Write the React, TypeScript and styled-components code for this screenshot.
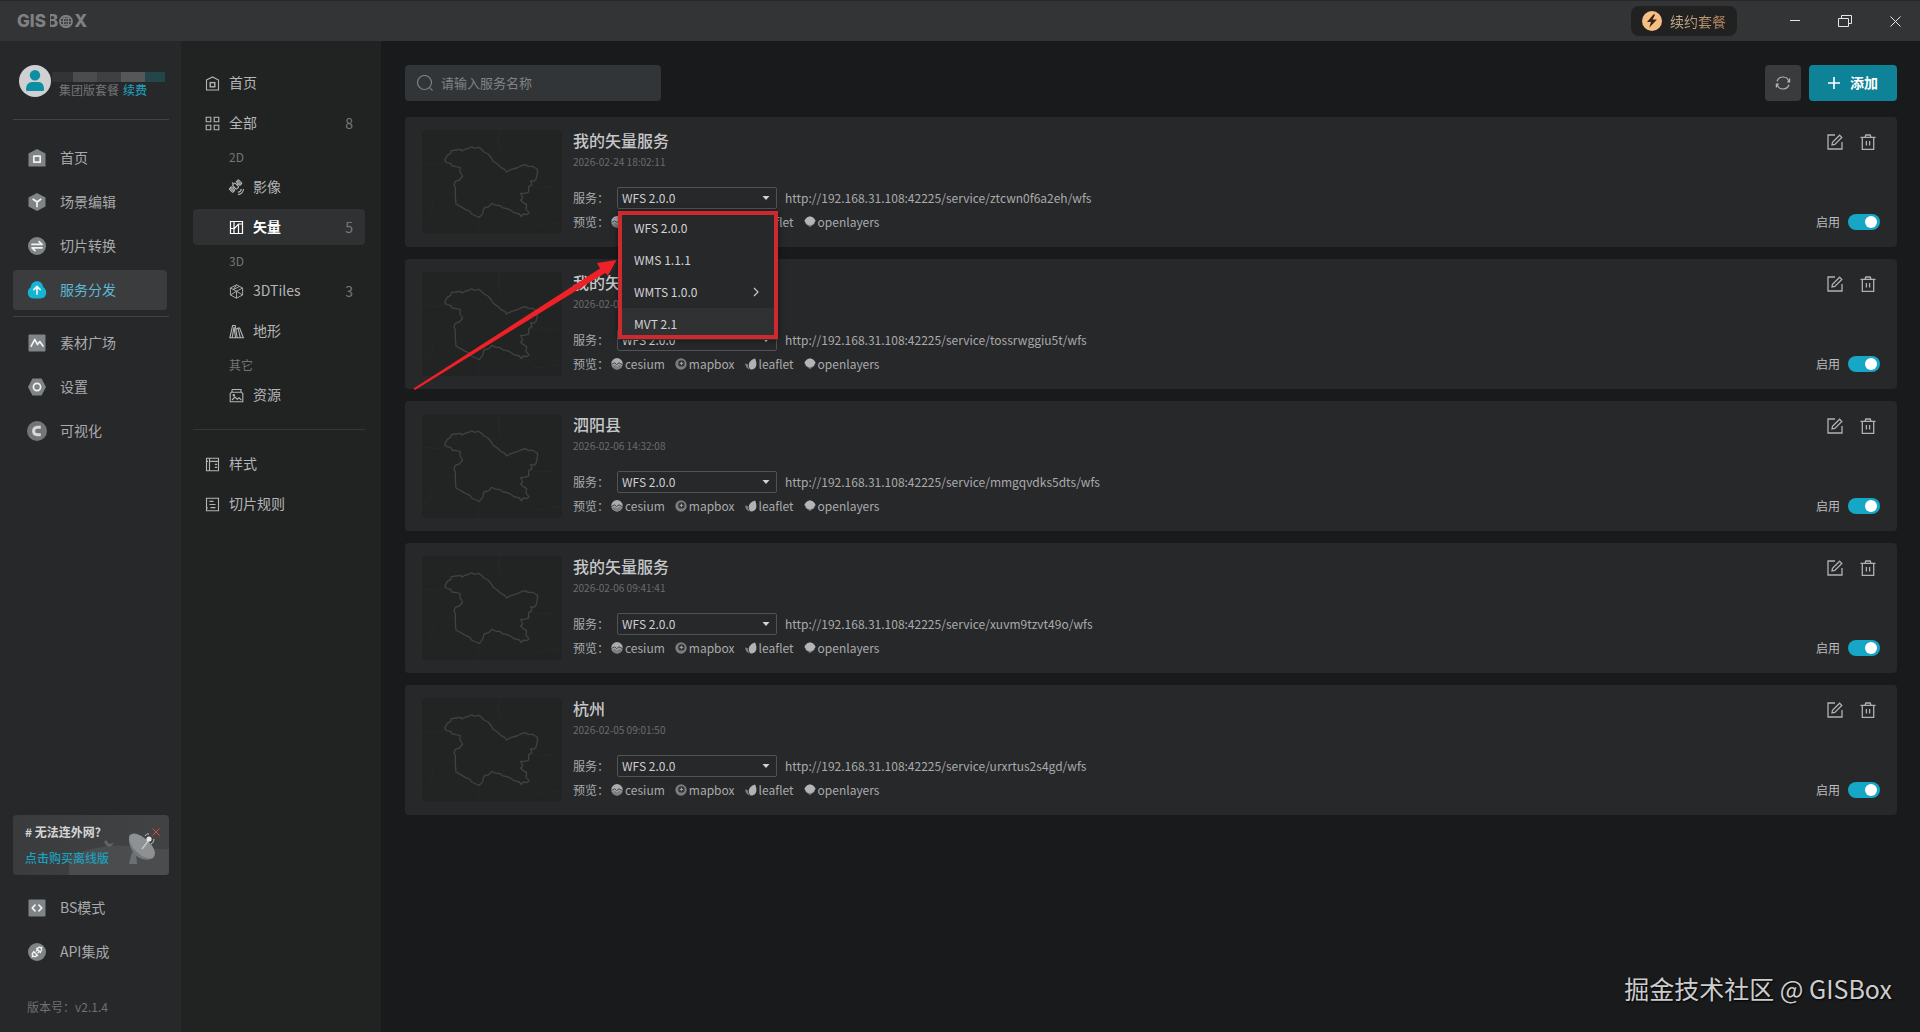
import React from "react";
import styled, { createGlobalStyle, css } from "styled-components";

const GlobalStyle = createGlobalStyle`
  *, *::before, *::after { box-sizing: border-box; }
  body {
    margin: 0;
    background: #191a1c;
    color: #a9aaac;
    font-family: "Noto Sans CJK SC", "Noto Sans", sans-serif;
    font-size: 14px;
    line-height: 20px;
  }
  button, input, select { font: inherit; color: inherit; }
  button { border: 0; padding: 0; background: none; cursor: pointer; }
  a { color: inherit; text-decoration: none; }
  ul { list-style: none; margin: 0; padding: 0; }
  svg { display: block; flex: none; }
`;

/* ---------- shell ---------- */

const Shell = styled.div`
  position: relative;
  display: flex;
  flex-direction: column;
  min-height: 100vh;
`;

const TitleBar = styled.header`
  display: flex;
  align-items: center;
  height: 41px;
  padding-left: 17px;
  background: #333436;
  border-top: 1px solid #262729;
`;

const Logo = styled.div`
  display: flex;
  align-items: center;
  gap: 1px;
  margin-right: auto;
  color: #7f8082;
  font-family: Inter, "Liberation Sans", sans-serif;
  font-size: 17px;
  font-weight: 800;
  line-height: 20px;
`;

const OpenB = styled.span`
  color: transparent;
  background: linear-gradient(90deg, transparent 3px, #7f8082 3px);
  background-clip: text;
`;

const RenewButton = styled.button`
  display: flex;
  align-items: center;
  gap: 8px;
  height: 30px;
  margin-right: 33px;
  padding: 0 11px;
  border-radius: 8px;
  background: #212122;
`;

const RenewText = styled.span`
  color: transparent;
  background: linear-gradient(90deg, #c5b494, #b08058);
  background-clip: text;
`;

const WindowButton = styled.button`
  display: grid;
  place-items: center;
  width: 50px;
  height: 40px;
  color: #e6e6e6;
`;

const Columns = styled.div`
  display: flex;
  flex: 1;
`;

const ItemText = styled.span`
  padding-bottom: 2px;
`;

/* ---------- primary sidebar ---------- */

const Sidebar = styled.aside`
  display: flex;
  flex-direction: column;
  width: 181px;
  flex: none;
  padding: 24px 12px 14px 13px;
  background: #27282a;
`;

const Account = styled.div`
  display: flex;
  align-items: flex-start;
  gap: 1px;
  height: 32px;
  padding-left: 6px;
`;

const AccountText = styled.div`
  display: flex;
  flex-direction: column;
  padding-top: 7px;
`;

const MaskedName = styled.div`
  display: flex;
  justify-content: center;
  width: 113px;
  height: 10px;
  overflow: hidden;
`;

const MaskBlock = styled.i<{ $tone: string }>`
  width: 24px;
  flex: none;
  background: ${(p) => p.$tone};
`;

const Plan = styled.div`
  padding-left: 7px;
  color: #747577;
  font-size: 12px;
  line-height: 16px;
`;

const Renew = styled.a`
  margin-left: 4px;
  color: #1fa5c4;
`;

const Rule = styled.hr<{ $top: number; $bottom: number; $tone?: string }>`
  width: 100%;
  height: 1px;
  margin: ${(p) => `${p.$top}px 0 ${p.$bottom}px`};
  border: 0;
  background: ${(p) => p.$tone ?? "#434446"};
`;

const NavList = styled.ul`
  display: flex;
  flex-direction: column;
  gap: 4px;
`;

const NavLink = styled.a<{ $active?: boolean }>`
  display: flex;
  align-items: center;
  gap: 14px;
  height: 40px;
  margin-right: 2px;
  padding-left: 15px;
  border-radius: 4px;
  color: #a9aaac;
  ${(p) =>
    p.$active &&
    css`
      background: #3b3c3e;
      color: #5cb8d4;
    `}
`;

const Promo = styled.section`
  position: relative;
  display: flex;
  flex-direction: column;
  gap: 6px;
  height: 60px;
  margin: auto 0 13px;
  padding: 7px 12px;
  border-radius: 4px;
  overflow: hidden;
  background: linear-gradient(100deg, #3a3b3d, #424345);
  font-size: 12px;
`;

const PromoTitle = styled.strong`
  position: relative;
  color: #d4d5d6;
  font-weight: 700;
`;

const PromoLink = styled.a`
  position: relative;
  color: #1ba0be;
  font-weight: 500;
`;

const PromoArt = styled.svg`
  position: absolute;
  right: 0;
  bottom: 0;
`;

const PromoClose = styled.button`
  position: absolute;
  top: 11px;
  right: 7px;
  display: grid;
  place-items: center;
  width: 12px;
  height: 12px;
  color: #e0464c;
`;

const Version = styled.p`
  margin: 25px 0 1px 14px;
  color: #6f7072;
  font-size: 12px;
`;

/* ---------- secondary panel ---------- */

const CategoryPanel = styled.nav`
  width: 200px;
  flex: none;
  padding: 24px 16px 24px 12px;
  background: #212222;
`;

const CategoryLink = styled.a<{ $nested?: boolean; $active?: boolean }>`
  display: flex;
  align-items: center;
  gap: 9px;
  height: 36px;
  margin-bottom: 4px;
  padding: 0 12px 0 ${(p) => (p.$nested ? 36 : 12)}px;
  border-radius: 4px;
  color: #b4b5b7;
  ${(p) =>
    p.$active &&
    css`
      background: #303133;
      color: #ffffff;
      font-weight: 700;
    `}
`;

const Count = styled.span`
  margin-left: auto;
  color: #77787a;
  font-weight: 400;
`;

const GroupLabel = styled.div`
  height: 24px;
  padding-left: 36px;
  color: #747577;
  font-size: 12px;
  line-height: 24px;
`;

/* ---------- main ---------- */

const Main = styled.main`
  flex: 1;
  min-width: 0;
  padding: 24px 23px 24px 24px;
`;

const Toolbar = styled.div`
  display: flex;
  gap: 8px;
  margin-bottom: 16px;
`;

const SearchBox = styled.label`
  display: flex;
  align-items: center;
  gap: 8px;
  width: 256px;
  height: 36px;
  margin-right: auto;
  padding: 0 12px;
  border-radius: 4px;
  background: #313538;
  color: #7d8082;
`;

const SearchInput = styled.input`
  flex: 1;
  min-width: 0;
  border: 0;
  padding: 0;
  outline: 0;
  background: none;
  color: #c8c9cb;
  font-size: 13px;
  &::placeholder { color: #808386; opacity: 1; }
`;

const RefreshButton = styled.button`
  display: grid;
  place-items: center;
  width: 36px;
  height: 36px;
  border-radius: 4px;
  background: #3a3b3d;
  color: #b4b5b7;
`;

const AddButton = styled.button`
  display: flex;
  align-items: center;
  justify-content: center;
  gap: 10px;
  width: 88px;
  height: 36px;
  border-radius: 4px;
  background: #0e8297;
  color: #ffffff;
  font-weight: 700;
`;

const CardList = styled.ul`
  display: flex;
  flex-direction: column;
  gap: 12px;
`;

const Card = styled.li`
  display: flex;
  padding: 13px 17px;
  border-radius: 4px;
  background: #27282a;
`;

const Thumb = styled.svg`
  margin-right: 11px;
  border-radius: 4px;
  background: #222323;
`;

const Details = styled.div`
  flex: 1;
  min-width: 0;
`;

const ServiceName = styled.h2`
  margin: 0 0 4px;
  color: #c6c7c9;
  font-size: 16px;
  font-weight: 500;
  line-height: 20px;
`;

const Created = styled.time`
  display: block;
  margin-bottom: 17px;
  color: #6b6c6e;
  font-size: 10px;
  line-height: 16px;
`;

const ServiceRow = styled.div`
  display: flex;
  align-items: center;
  gap: 8px;
  height: 22px;
  margin-bottom: 4px;
  font-size: 12px;
`;

const SelectWrap = styled.div`
  position: relative;
  width: 160px;
  height: 22px;
`;

const TypeSelect = styled.select`
  appearance: none;
  display: block;
  width: 100%;
  height: 100%;
  padding: 0 20px 0 4px;
  border: 1px solid #515254;
  border-radius: 2px;
  background: #27282a;
  color: #cdced0;
  line-height: 18px;
`;

const Caret = styled.svg`
  position: absolute;
  top: 9px;
  right: 7px;
  pointer-events: none;
`;

const Menu = styled.ul`
  position: absolute;
  z-index: 2;
  top: 25px;
  left: 1px;
  width: 160px;
  background: #27282a;
  box-shadow: 0 0 6px rgba(0, 0, 0, 0.5);
  &::after {
    content: "";
    position: absolute;
    inset: -1px 0 1px 0;
    border: 4px solid #cf2930;
    pointer-events: none;
  }
`;

const MenuItem = styled.button<{ $hover?: boolean }>`
  display: flex;
  align-items: center;
  justify-content: space-between;
  width: 100%;
  height: 32px;
  padding: 0 18px 0 16px;
  background: ${(p) => (p.$hover ? "#303133" : "transparent")};
  color: #d2d3d5;
`;

const PreviewRow = styled.div`
  display: flex;
  align-items: center;
  height: 18px;
  font-size: 12px;
  line-height: 18px;
`;

const PreviewLink = styled.a`
  display: flex;
  align-items: center;
  gap: 2px;
  margin: 0 8px 0 2px;
`;

const CardActions = styled.div`
  display: flex;
  flex-direction: column;
  align-items: flex-end;
  justify-content: space-between;
`;

const IconButtons = styled.div`
  display: flex;
  gap: 9px;
  color: #b0b1b3;
`;

const IconButton = styled.button`
  display: grid;
  place-items: center;
  width: 24px;
  height: 24px;
`;

const EnableLabel = styled.label`
  display: flex;
  align-items: center;
  gap: 8px;
  height: 24px;
  color: #bcbdbf;
  font-size: 12px;
`;

const Switch = styled.input`
  appearance: none;
  display: flex;
  align-items: center;
  width: 32px;
  height: 16px;
  margin: 0;
  padding: 0 3px;
  border-radius: 8px;
  background: #55575a;
  &::before {
    content: "";
    width: 12px;
    height: 12px;
    border-radius: 50%;
    background: #ffffff;
  }
  &:checked { background: #16a6c6; justify-content: flex-end; }
`;

const Arrow = styled.svg`
  position: absolute;
  z-index: 3;
  top: 255px;
  left: 410px;
  pointer-events: none;
`;

const Watermark = styled.div`
  position: absolute;
  right: 28px;
  bottom: 26px;
  color: #cdcdce;
  font-size: 25px;
  line-height: 36px;
  text-shadow: 1px 1px 2px #000000;
`;

/* ---------- icons ---------- */

const FILL = "#7f8486";

type IconProps = { children: React.ReactNode };

const Solid = ({ children }: IconProps) => (
  <svg width="18" height="18" viewBox="0 0 18 18" fill={FILL} strokeLinecap="round" strokeLinejoin="round" overflow="visible">
    {children}
  </svg>
);

const Line = ({ children }: IconProps) => (
  <svg width="15" height="15" viewBox="0 0 15 15" fill="none" stroke="currentColor" strokeWidth="1.1" overflow="visible">
    {children}
  </svg>
);

const white = { fill: "none", stroke: "#f2f2f2", strokeWidth: 1.7 };

const solidIcons = {
  home: <Solid><path d="M9 0 17.5 4.5V17.5H.5V4.5Z" /><rect x="5.8" y="7.2" width="6.4" height="6" {...white} /></Solid>,
  scene: <Solid><path d="M9 0 17.5 4.5v9L9 18 .5 13.5v-9Z" /><path d="M5.2 6.2 9 9l3.8-2.8M9 9v4.5" {...white} /></Solid>,
  convert: <Solid><circle cx="9" cy="9" r="9" /><path d="M4 7.4h10L11 4.6M14 10.8H4l3 2.8" {...white} /></Solid>,
  publish: <Solid><path fill="#14b4d2" d="M9 .2c3.600 0 5.800 2.600 6.200 5.800 1.900 1.500 3 3.500 3 5.700 0 3.500-2.500 5.700-5.600 5.700H5.400C2.300 17.400-.2 15.200-.2 11.700-.2 9.500.9 7.500 2.800 6 3.200 2.800 5.400.2 9 .2Z" /><path d="M9 13V6M5.800 8.600 9 5.400l3.200 3.200" {...white} /></Solid>,
  assets: <Solid><rect x=".5" y=".5" width="17" height="17" rx="1" /><path d="M3.200 12.200 6.800 5.400l2.700 5.200 2.300-3 3.200 4.400" {...white} /></Solid>,
  settings: <Solid><path d="M4.500.5h9L18 9l-4.500 8.500h-9L0 9Z" /><circle cx="9" cy="9" r="3.600" {...white} /></Solid>,
  visual: <Solid><circle cx="9" cy="9" r="10" fill="#737577" /><path d="M12.800 5.300H9.500C7 5.300 5.600 6.900 5.600 9s1.400 3.700 3.900 3.700h3.300" fill="none" stroke="#d8d8d8" strokeWidth="3" strokeLinecap="butt" /></Solid>,
  code: <Solid><rect x=".5" y=".5" width="17" height="17" rx="1" /><path d="M7 6.200 4.200 9 7 11.800M11 6.200 13.800 9 11 11.800" {...white} /></Solid>,
  plug: (
    <Solid>
      <circle cx="9" cy="9" r="9" />
      <g transform="rotate(45 9 9)" fill="none" stroke="#f2f2f2" strokeWidth="1.400">
        <path d="M6.200 6.800h5.600M6.800 6.800V5.600a2.200 2.200 0 0 1 4.400 0v1.200M9 3.200V2.200M7.800 7v1.800M10.200 7v1.800" />
        <path d="M6.200 11h5.600M6.800 11v1.400a2.200 2.200 0 0 0 4.400 0V11M9 14.800v1" />
      </g>
    </Solid>
  ),
};

const lineIcons = {
  home: <Line><path d="M1.500 4 7.500.9l6 3.100v10h-12Z" /><rect x="5.200" y="6.600" width="4.600" height="4.200" strokeWidth="1.400" /></Line>,
  grid: <Line><path d="M1.200 1.200h4.600v4.600H1.200ZM9.200 1.200h4.600v4.600H9.200ZM1.200 9.200h4.600v4.600H1.200ZM9.200 9.200h4.600v4.600H9.200Z" /></Line>,
  satellite: (
    <Line>
      <g transform="rotate(-45 6.500 6)">
        <rect x="4.700" y="3.200" width="3.600" height="5.800" rx="1" />
        <rect x="0" y="3.600" width="3" height="5" rx=".5" />
        <rect x="10" y="3.600" width="3" height="5" rx=".5" />
        <path d="M3 6.100h1.700M8.300 6.100H10M6.500 1v2.200M1.500 3.600v5M11.500 3.600v5" />
      </g>
      <path d="M8.800 12.200a4.200 4.200 0 0 0 3.600-3.400M9 14.600a6.600 6.600 0 0 0 5.600-5.600" />
    </Line>
  ),
  vector: <Line><path d="M1.500 1.500h12v12h-12ZM5 1.500v12M1.500 8.500h4l4-4.500h4M9.500 4v9.500" strokeWidth="1.200" /></Line>,
  cube: <Line><path d="M7.500.8 13.600 4v7l-6.100 3.200L1.400 11V4ZM1.400 4l6.100 3.200L13.600 4M7.500 7.200v7M1.400 11l6.100-3.800 6.100 3.800M7.500.8 4.400 5.600M10.600 2.400l-6.200 3.200" strokeWidth=".9" /></Line>,
  terrain: <Line><path d="M.8 13.800 3.600 1.500h2.600l2 12.300ZM3.200 13.500 5 3l1.500 10.500M7 5.400l2-1.400h1.600l3.800 9.800H8.200M9 4.200l2.300 9.400" /></Line>,
  resource: <Line><path d="M2.500 4.200h10l1.300 1.300v8.300H1.200V5.500ZM3 1.500h9v2.500M3 1.500v2.500M3 12l3-3 2.200 2.200 1.800-1.400 2.400 2.400" /><circle cx="4.800" cy="7.200" r=".7" /></Line>,
  style: <Line><path d="M1.500 1.200h12v12.600h-12ZM4.500 1.200v12.600M4.500 4.400h9M9.800 7.400h2.400M9.800 10.400h2.400M1.500 4.400h1.500" /></Line>,
  rules: <Line><path d="M1.500 1.200h12v12.600h-12ZM4.500 4.400h4M4.500 7.500h6M5.500 10.600h5M1.500 11h1.500" /></Line>,
};

const previewIcons = {
  cesium: <svg width="12" height="12" viewBox="0 0 12 12"><circle cx="6" cy="5.800" r="5.700" fill="#abacae" /><path d="M.4 6.600 3.600 4.800l2 1.800L8 4.800l3.500 2" fill="none" stroke="#3c3d3f" /><path d="M.8 8 3.600 6.400 6 8.400l2-1.800 3.300 1.400A5.700 5.700 0 0 1 .8 8Z" fill="#7d7e80" /></svg>,
  mapbox: <svg width="12" height="12" viewBox="0 0 12 12"><circle cx="6" cy="6" r="5.700" fill="#7b7d7f" /><circle cx="6.400" cy="5.400" r="3.200" fill="#303234" /><path d="m6.400 3.200.7 1.500 1.500.7-1.500.7-.7 1.500-.7-1.500-1.500-.7 1.500-.7Z" fill="#a6a7a9" /></svg>,
  leaflet: <svg width="12" height="12" viewBox="0 0 12 12"><path d="M10 .4C6.400 1.600 3.600 4 3.800 7.400c.1 2 1 3.400 2.200 4.200 3.400-.2 5.400-2.200 5.400-5.600C11.400 4 11 2 10 .4Z" fill="#b0b3b2" /><path d="M.2 5.600c0 3 1.800 5.400 5 6C3.600 10 3 8.400 3 6.400 2.200 5.800 1.200 5.600.2 5.600Z" fill="#7b7e7e" /></svg>,
  openlayers: <svg width="12" height="12" viewBox="0 0 12 12"><path d="M6 3.800 11 7.600 6 11.200 1 7.600Z" fill="#6e7072" /><path d="M6 .3 8.800 1.200 10.600 3l1 2L9.200 8.200 6 9.600 2.800 8.200.4 5l1-2L3.200 1.200Z" fill="#b4b5b7" /></svg>,
};

/* ---------- data ---------- */

type NavItem = { label: string; icon: keyof typeof solidIcons; active?: boolean };

const topNav: NavItem[] = [
  { label: "首页", icon: "home" },
  { label: "场景编辑", icon: "scene" },
  { label: "切片转换", icon: "convert" },
  { label: "服务分发", icon: "publish", active: true },
];
const midNav: NavItem[] = [
  { label: "素材广场", icon: "assets" },
  { label: "设置", icon: "settings" },
  { label: "可视化", icon: "visual" },
];
const bottomNav: NavItem[] = [
  { label: "BS模式", icon: "code" },
  { label: "API集成", icon: "plug" },
];

const services = [
  { name: "我的矢量服务", created: "2026-02-24 18:02:11", key: "ztcwn0f6a2eh", open: true },
  { name: "我的矢量服务", created: "2026-02-06 15:10:26", key: "tossrwggiu5t" },
  { name: "泗阳县", created: "2026-02-06 14:32:08", key: "mmgqvdks5dts" },
  { name: "我的矢量服务", created: "2026-02-06 09:41:41", key: "xuvm9tzvt49o" },
  { name: "杭州", created: "2026-02-05 09:01:50", key: "urxrtus2s4gd" },
];

const viewers = ["cesium", "mapbox", "leaflet", "openlayers"] as const;
const serviceTypes = ["WFS 2.0.0", "WMS 1.1.1", "WMTS 1.0.0", "MVT 2.1"];
const maskTones = ["#333436", "#4c4c4e", "#3d4144", "#575759", "#24464b"];

/* ---------- parts ---------- */

const Nav = ({ items }: { items: NavItem[] }) => (
  <NavList>
    {items.map((item) => (
      <li key={item.label}>
        <NavLink href="#" $active={item.active}>
          {solidIcons[item.icon]}
          <ItemText>{item.label}</ItemText>
        </NavLink>
      </li>
    ))}
  </NavList>
);

type CategoryProps = { icon: keyof typeof lineIcons; label: string; count?: number; nested?: boolean; active?: boolean };

const Category = ({ icon, label, count, nested, active }: CategoryProps) => (
  <CategoryLink href="#" $nested={nested} $active={active}>
    {lineIcons[icon]}
    <ItemText>{label}</ItemText>
    {count !== undefined && <Count>{count}</Count>}
  </CategoryLink>
);

const MapThumb = () => (
  <Thumb width="140" height="104" viewBox="36 42 420 312" fill="none" strokeLinejoin="round">
    <path d="M36 140l40 6 30-8M270 42l-6 30 10 40M36 317l22-20 14-40M100 228h34M360 212l30 4 50-4M360 310l12 18h30l20-10 34 8M205 302v50" stroke="#282929" strokeWidth="3" />
    <path
      d="M104 132 112 118 122 112 124 104 138 102 152 100 156 105 165 100 178 96 186 92 192 97 206 94 214 100 222 108 234 114 244 126 250 136 262 144 272 154 284 160 290 168 304 160 320 156 332 150 346 146 354 151 368 151 376 156 383 160 381 178 378 190 372 196 362 194 366 206 356 212 356 228 344 232 332 232 338 246 332 252 340 260 350 266 348 280 357 290 350 296 340 294 334 302 328 294 312 290 304 284 292 278 280 276 268 268 258 268 246 262 236 272 222 276 218 292 208 304 198 300 184 294 180 286 166 280 152 272 138 264 136 240 136 216 132 206 136 196 148 192 158 180 150 168 150 154 138 152 126 150 122 142 110 140Z"
      stroke="#404141"
      strokeWidth="4"
    />
  </Thumb>
);

const TypeMenu = () => (
  <Menu>
    {serviceTypes.map((type) => (
      <li key={type}>
        <MenuItem type="button" $hover={type === "MVT 2.1"}>
          {type}
          {type.startsWith("WMTS") && (
            <svg width="8" height="10" viewBox="0 0 8 10" fill="none" stroke="#c4c5c7" strokeWidth="1.200">
              <path d="m2 1 4 4-4 4" />
            </svg>
          )}
        </MenuItem>
      </li>
    ))}
  </Menu>
);

type ServiceProps = { id: string; service: (typeof services)[number] };

const ServiceCard = ({ id, service }: ServiceProps) => (
  <Card>
    <MapThumb />
    <Details>
      <ServiceName>{service.name}</ServiceName>
      <Created>{service.created}</Created>
      <ServiceRow>
        <label htmlFor={id}>服务：</label>
        <SelectWrap>
          <TypeSelect id={id} defaultValue="WFS 2.0.0">
            {serviceTypes.map((type) => (
              <option key={type}>{type}</option>
            ))}
          </TypeSelect>
          <Caret width="8" height="5" viewBox="0 0 8 5">
            <path d="M.5 0h7L4 4Z" fill="#d2d3d5" />
          </Caret>
          {service.open && <TypeMenu />}
        </SelectWrap>
        <span>{`http://192.168.31.108:42225/service/${service.key}/wfs`}</span>
      </ServiceRow>
      <PreviewRow>
        预览：
        {viewers.map((viewer) => (
          <PreviewLink href="#" key={viewer}>
            {previewIcons[viewer]}
            {viewer}
          </PreviewLink>
        ))}
      </PreviewRow>
    </Details>
    <CardActions>
      <IconButtons>
        <IconButton type="button" aria-label="编辑">
          <svg width="16" height="16" viewBox="0 0 16 16" fill="none" stroke="currentColor" strokeWidth="1.300">
            <path d="M8 1H1v14h14V8" />
            <path d="m5 11 .5-2.800L12.600 1.200l2.200 2.200-7 7L5 11Z" />
          </svg>
        </IconButton>
        <IconButton type="button" aria-label="删除">
          <svg width="16" height="16" viewBox="0 0 16 16" fill="none" stroke="currentColor" strokeWidth="1.300">
            <path d="M.5 3.400h15M5 3.200 5.800 1h4.400l.8 2.200M2.300 3.600v11.800h11.400V3.600M6.400 7v4.600M9.600 7v4.600" />
          </svg>
        </IconButton>
      </IconButtons>
      <EnableLabel>
        启用
        <Switch type="checkbox" defaultChecked />
      </EnableLabel>
    </CardActions>
  </Card>
);

export default function App() {
  return (
    <Shell lang="zh-CN">
      <GlobalStyle />
      <TitleBar>
        <Logo>
          <span>GIS</span>
          <OpenB>B</OpenB>
          <svg width="14" height="13" viewBox="0 0 13 12" fill="none" stroke="currentColor" strokeWidth="1.200">
            <ellipse cx="6.500" cy="6" rx="5.600" ry="5.300" strokeWidth="1.600" />
            <ellipse cx="6.500" cy="6" rx="2.400" ry="5.300" />
            <path d="M1 6h11M6.500.5v11M1.800 3.200h9.400M1.800 8.800h9.400" strokeWidth=".8" />
          </svg>
          <span>X</span>
        </Logo>
        <RenewButton type="button">
          <svg width="20" height="20" viewBox="0 0 20 20">
            <circle cx="10" cy="10" r="10" fill="#f6bf85" />
            <path d="M11.400 3.400 5 11h4l-1.800 5.800L15 8.600h-4.400l2.600-5.200Z" fill="#3a2517" />
          </svg>
          <RenewText>续约套餐</RenewText>
        </RenewButton>
        <WindowButton type="button" aria-label="最小化">
          <svg width="10" height="12" viewBox="0 0 10 12" stroke="currentColor"><path d="M0 5.500h10" /></svg>
        </WindowButton>
        <WindowButton type="button" aria-label="还原">
          <svg width="14" height="12" viewBox="0 0 14 12" fill="none" stroke="currentColor"><path d="M.5 3.500h10v8H.5ZM3.500 3.500v-3h10v8h-3" /></svg>
        </WindowButton>
        <WindowButton type="button" aria-label="关闭">
          <svg width="11" height="11" viewBox="0 0 11 11" stroke="currentColor"><path d="m.5.5 10 10M10.500.5l-10 10" /></svg>
        </WindowButton>
      </TitleBar>

      <Columns>
        <Sidebar>
          <Account>
            <svg width="32" height="32" viewBox="0 0 32 32">
              <circle cx="16" cy="16" r="16" fill="#cfd0d2" />
              <circle cx="16" cy="10.300" r="5.200" fill="#0d8ea3" />
              <path d="M7 24.500c0-4.600 2.500-7.500 6-7.500h6.500c3.500 0 5.500 2.900 5.500 7.500 0 .8-.5 1.500-1.400 1.500H8.400C7.500 26 7 25.300 7 24.500Z" fill="#0d8ea3" />
            </svg>
            <AccountText>
              <MaskedName>
                {maskTones.map((tone) => (
                  <MaskBlock key={tone} $tone={tone} />
                ))}
              </MaskedName>
              <Plan>
                集团版套餐<Renew href="#">续费</Renew>
              </Plan>
            </AccountText>
          </Account>
          <Rule $top={22} $bottom={18} />
          <Nav items={topNav} />
          <Rule $top={6} $bottom={6} />
          <Nav items={midNav} />
          <Promo>
            <PromoArt width="100" height="60" viewBox="0 0 100 60">
              <path d="M0 42c20-9 40-13 60-11 16 1 26 4 40 3v26H0Z" fill="#4b4c4e" />
              <path d="m37 25 3 4 5-1-4 4-3-1-3-4Z" fill="#626566" />
              <path d="m63 37-3 12h8l-1-10Z" fill="#6d7072" />
              <path d="M61 19c-3 8 1 18 8 23 5 3 12 4 16 0Z" fill="#74787a" />
              <ellipse cx="73" cy="31" rx="16" ry="8" transform="rotate(43 73 31)" fill="#8d9193" />
              <path d="M73 34 80 25" stroke="#c4c7c8" strokeWidth="1.500" />
              <circle cx="80" cy="24" r="2.600" fill="#e6e8e8" />
              <path d="M76 21c1-2 2-2 4-2M85 24c0 2-1 4-3 5" fill="none" stroke="#c4c7c8" />
            </PromoArt>
            <PromoTitle># 无法连外网?</PromoTitle>
            <PromoLink href="#">点击购买离线版</PromoLink>
            <PromoClose type="button" aria-label="关闭提示">
              <svg width="8" height="8" viewBox="0 0 8 8" stroke="currentColor"><path d="m.5.5 7 7M7.500.5l-7 7" /></svg>
            </PromoClose>
          </Promo>
          <Nav items={bottomNav} />
          <Version>版本号：v2.1.4</Version>
        </Sidebar>

        <CategoryPanel>
          <Category icon="home" label="首页" />
          <Category icon="grid" label="全部" count={8} />
          <GroupLabel>2D</GroupLabel>
          <Category icon="satellite" label="影像" nested />
          <Category icon="vector" label="矢量" count={5} nested active />
          <GroupLabel>3D</GroupLabel>
          <Category icon="cube" label="3DTiles" count={3} nested />
          <Category icon="terrain" label="地形" nested />
          <GroupLabel>其它</GroupLabel>
          <Category icon="resource" label="资源" nested />
          <Rule $top={16} $bottom={16} $tone="#353636" />
          <Category icon="style" label="样式" />
          <Category icon="rules" label="切片规则" />
        </CategoryPanel>

        <Main>
          <Toolbar>
            <SearchBox>
              <svg width="16" height="16" viewBox="0 0 16 16" fill="none" stroke="currentColor" strokeWidth="1.200">
                <circle cx="7.500" cy="7.500" r="7" />
                <path d="m12.600 12.600 3 3" />
              </svg>
              <SearchInput type="text" placeholder="请输入服务名称" aria-label="服务名称" />
            </SearchBox>
            <RefreshButton type="button" aria-label="刷新">
              <svg width="14" height="14" viewBox="0 0 14 14" fill="none" stroke="currentColor" strokeWidth="1.200" overflow="visible">
                <path d="M1 5.200A6.300 6.300 0 0 1 13 5.600M13 8.800A6.300 6.300 0 0 1 1 8.400" />
                <path d="M13.600 2.400v3.400h-2.400M.4 11.600V8.200h2.400" />
              </svg>
            </RefreshButton>
            <AddButton type="button">
              <svg width="12" height="12" viewBox="0 0 12 12" stroke="currentColor" strokeWidth="1.600"><path d="M0 6h12M6 0v12" /></svg>
              <ItemText>添加</ItemText>
            </AddButton>
          </Toolbar>
          <CardList>
            {services.map((service, index) => (
              <ServiceCard key={service.key} id={`service-type-${index}`} service={service} />
            ))}
          </CardList>
        </Main>
      </Columns>

      <Arrow width="212" height="140" viewBox="0 0 212 140">
        <path d="M3.500 133.500 190 13.500 187 8 206.500 5 198 20.500 195 18 5 135Z" fill="#ee2128" />
      </Arrow>
      <Watermark>掘金技术社区 @ GISBox</Watermark>
    </Shell>
  );
}
